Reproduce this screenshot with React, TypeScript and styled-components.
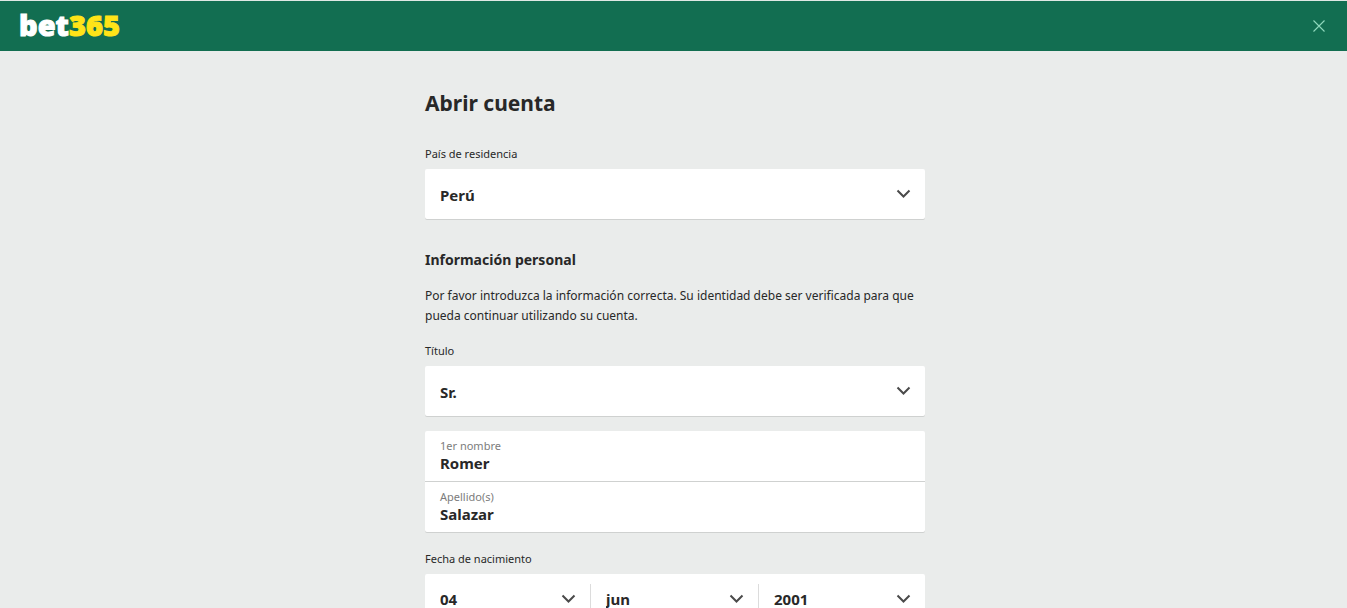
import React from "react";
import styled, { createGlobalStyle } from "styled-components";

const GlobalStyle = createGlobalStyle`
  * { box-sizing: border-box; }
  html, body, #root { height: 100%; }
  body {
    margin: 0;
    background: #eaeceb;
    color: #282828;
    font-family: "Segoe UI", "Noto Sans", "Open Sans", sans-serif;
    font-size: 12px;
  }
`;

const Page = styled.div`
  display: flex;
  flex-direction: column;
  height: 100%;
`;

const Header = styled.header`
  display: flex;
  flex: none;
  align-items: center;
  justify-content: space-between;
  height: 51px;
  padding: 0 22px 0 19px;
  border-top: 1px solid #dfe8e4;
  background: #126e51;
`;

const Logo = styled.a`
  padding-bottom: 2px;
  color: #ffffff;
  font-family: "Open Sans", sans-serif;
  font-size: 29px;
  font-weight: 800;
  line-height: 40px;
  text-decoration: none;
  -webkit-text-stroke: 1px currentColor;
`;

const LogoAccent = styled.span`
  color: #ffe418;
`;

const CloseButton = styled.button`
  display: flex;
  padding: 0;
  border: 0;
  background: none;
  color: #8fd9bd;
  cursor: pointer;
`;

const Main = styled.main`
  flex: 1;
  min-height: 0;
  overflow-y: auto;
  scrollbar-width: none;
  padding: 37px 20px 40px 23px;
`;

const Form = styled.form`
  max-width: 500px;
  margin: 0 auto;
`;

const Title = styled.h1`
  margin: 0 0 28px;
  font-size: 21px;
  font-weight: 700;
  line-height: 30px;
`;

const SectionTitle = styled.h2`
  margin: 31px 0 16px;
  font-size: 14px;
  font-weight: 700;
  line-height: 20px;
`;

const Intro = styled.p`
  margin: 0 0 17px;
  font-size: 12px;
  line-height: 20px;
`;

const Label = styled.label`
  display: block;
  margin-bottom: 7px;
  font-size: 11px;
  line-height: 16px;
`;

const Fieldset = styled.fieldset`
  min-width: 0;
  margin: 19px 0 0;
  padding: 0;
  border: 0;
`;

const Legend = styled.legend`
  margin-bottom: 7px;
  padding: 0;
  font-size: 11px;
  line-height: 16px;
`;

const Card = styled.div`
  border-radius: 2px;
  background: #ffffff;
  box-shadow: 0 1px 0 #cfd1d0;
`;

const NameCard = styled(Card)`
  margin-top: 15px;
`;

const SelectWrap = styled.div<{ $divided?: boolean }>`
  position: relative;
  height: ${(p) => (p.$divided ? "30px" : "50px")};
  margin: ${(p) => (p.$divided ? "10px 0" : "0")};
  border-left: ${(p) => (p.$divided ? "1px solid #dcdcdc" : "0")};
`;

const Select = styled.select`
  display: block;
  width: 100%;
  height: 100%;
  padding: 2px 40px 0 15px;
  border: 0;
  background: transparent;
  color: #282828;
  font-family: inherit;
  font-size: 15px;
  font-weight: 700;
  appearance: none;
`;

const DateCard = styled(Card)`
  display: grid;
  grid-template-columns: 165fr 168fr 167fr;

  ${Select} {
    padding-top: 0;
  }
`;

const Arrow = styled.svg`
  position: absolute;
  top: calc(50% - 5px);
  right: 14px;
  pointer-events: none;
`;

const TextField = styled.div`
  display: flex;
  flex-direction: column;
  height: 50px;
  padding: 7px 15px 0;

  & + & {
    height: 51px;
    border-top: 1px solid #cfd1d0;
  }
`;

const FieldLabel = styled.label`
  color: #7c7c7c;
  font-size: 11px;
  line-height: 16px;
`;

const Input = styled.input`
  width: 100%;
  height: 18px;
  padding: 0;
  border: 0;
  outline: 0;
  background: transparent;
  color: #282828;
  font-family: inherit;
  font-size: 15px;
  font-weight: 700;
  line-height: 18px;
`;

type DropdownProps = {
  id: string;
  options: string[];
  label?: string;
  divided?: boolean;
};

function Dropdown({ id, options, label, divided }: DropdownProps) {
  return (
    <SelectWrap $divided={divided}>
      <Select id={id} aria-label={label} defaultValue={options[0]}>
        {options.map((option) => (
          <option key={option}>{option}</option>
        ))}
      </Select>
      <Arrow width="15" height="10" viewBox="0 0 15 10" fill="none" aria-hidden="true">
        <path d="M1.5 1.5L7.5 7.5L13.5 1.5" stroke="#4a4a4a" strokeWidth="2" />
      </Arrow>
    </SelectWrap>
  );
}

export default function App() {
  return (
    <>
      <GlobalStyle />
      <Page>
        <Header>
          <Logo href="#">
            bet<LogoAccent>365</LogoAccent>
          </Logo>
          <CloseButton type="button" aria-label="Cerrar">
            <svg width="12" height="12" viewBox="0 0 12 12" fill="none" aria-hidden="true">
              <path d="M0.5 0.5L11.5 11.5M11.5 0.5L0.5 11.5" stroke="currentColor" strokeWidth="1.1" />
            </svg>
          </CloseButton>
        </Header>
        <Main>
          <Form>
            <Title>Abrir cuenta</Title>
            <Label htmlFor="country">País de residencia</Label>
            <Card>
              <Dropdown id="country" options={["Perú"]} />
            </Card>

            <SectionTitle>Información personal</SectionTitle>
            <Intro>
              Por favor introduzca la información correcta. Su identidad debe ser verificada para que
              pueda continuar utilizando su cuenta.
            </Intro>

            <Label htmlFor="title">Título</Label>
            <Card>
              <Dropdown id="title" options={["Sr."]} />
            </Card>

            <NameCard>
              <TextField>
                <FieldLabel htmlFor="first-name">1er nombre</FieldLabel>
                <Input id="first-name" type="text" defaultValue="Romer" />
              </TextField>
              <TextField>
                <FieldLabel htmlFor="last-name">Apellido(s)</FieldLabel>
                <Input id="last-name" type="text" defaultValue="Salazar" />
              </TextField>
            </NameCard>

            <Fieldset>
              <Legend>Fecha de nacimiento</Legend>
              <DateCard>
                <Dropdown id="day" label="Día" options={["04"]} />
                <Dropdown id="month" label="Mes" options={["jun"]} divided />
                <Dropdown id="year" label="Año" options={["2001"]} divided />
              </DateCard>
            </Fieldset>
          </Form>
        </Main>
      </Page>
    </>
  );
}
